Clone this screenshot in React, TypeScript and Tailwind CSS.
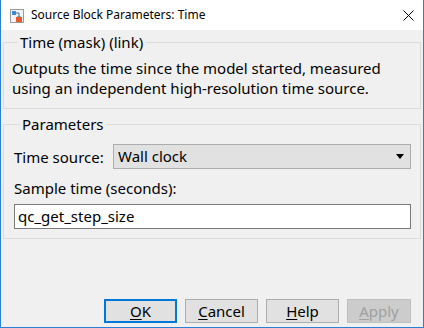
const font = { fontFamily: '"Segoe UI", "Noto Sans", "Liberation Sans", sans-serif' };

function BlockIcon() {
  return (
    <svg width="14" height="14" viewBox="0 0 14 14" aria-hidden="true">
      <rect x="0.5" y="0.5" width="13" height="13" fill="#f4f4f4" stroke="#9a9a9a" />
      <rect x="2" y="2" width="4" height="4" fill="#3a8ad8" />
      <path d="M6 4 H9 V8" fill="none" stroke="#3a6fb0" strokeWidth="1" />
      <path d="M7.5 7 L9 8.5 L10.5 7" fill="none" stroke="#3a6fb0" strokeWidth="1" />
      <rect x="6" y="8" width="6" height="5" fill="#e8582a" />
    </svg>
  );
}

function CloseGlyph() {
  return (
    <svg width="11" height="11" viewBox="0 0 11 11" aria-hidden="true">
      <path d="M0.5 0.5 L10.5 10.5 M10.5 0.5 L0.5 10.5" stroke="#000" strokeWidth="1" />
    </svg>
  );
}

function DialogButton({
  mnemonic,
  rest,
  primary,
  disabled,
  width,
}: {
  mnemonic: string;
  rest: string;
  primary?: boolean;
  disabled?: boolean;
  width: string;
}) {
  const look = primary
    ? 'border-2 border-[#0078d7] bg-[#e1e1e1] text-black'
    : disabled
      ? 'border border-[#bfbfbf] bg-[#cccccc] text-[#a0a0a0]'
      : 'border border-[#adadad] bg-[#e1e1e1] text-black';
  return (
    <button
      type="button"
      disabled={disabled}
      className={`h-[24px] flex items-center justify-center text-[15px] leading-none ${look} ${width}`}
    >
      <span>
        <span className="underline underline-offset-[2px]">{mnemonic}</span>
        {rest}
      </span>
    </button>
  );
}

export default function App() {
  return (
    <div
      className="w-[424px] h-[328px] flex flex-col bg-[#f0f0f0] border-x border-b border-[#2b7fd4] text-black"
      style={font}
    >
      {/* title bar */}
      <div className="h-[30px] shrink-0 bg-white flex items-center">
        <div className="ml-[9px] mt-[1px]">
          <BlockIcon />
        </div>
        <span className="ml-[7px] text-[12px] leading-none">Source Block Parameters: Time</span>
        <div className="ml-auto mr-[9px] mt-[1px]">
          <CloseGlyph />
        </div>
      </div>

      <div className="px-[2px] flex flex-col">
        <fieldset className="mt-[2px] h-[77px] border border-[#dcdcdc] pl-[8px] pr-[8px]">
          <legend className="ml-[6px] px-[2px] text-[15px] leading-[20px]">Time (mask) (link)</legend>
          <p className="mt-[6px] text-[15px] leading-[20px] whitespace-nowrap">
            Outputs the time since the model started, measured
            <br />
            using an independent high-resolution time source.
          </p>
        </fieldset>

        <fieldset className="mt-[5px] h-[125px] border border-[#dcdcdc] pl-[10px] pr-[9px]">
          <legend className="ml-[6px] px-[2px] text-[15px] leading-[20px]">Parameters</legend>
          <div className="mt-[10px] flex items-center">
            <span className="w-[99px] text-[15px] leading-[20px]">Time source:</span>
            <div className="flex-1 h-[25px] flex items-center border border-[#adadad] bg-[#e1e1e1] pl-[4px] pr-[6px]">
              <span className="text-[15px] leading-none">Wall clock</span>
              <svg className="ml-auto" width="8" height="5" viewBox="0 0 8 5" aria-hidden="true">
                <path d="M0 0 H8 L4 5 Z" fill="#000" />
              </svg>
            </div>
          </div>
          <div className="mt-[9px] text-[15px] leading-[20px]">Sample time (seconds):</div>
          <div className="mt-[6px] h-[25px] flex items-center border border-[#7a7a7a] bg-white pl-[3px]">
            <span className="text-[15px] leading-none">qc_get_step_size</span>
          </div>
        </fieldset>
      </div>

      <div className="mt-auto mb-[4px] mr-[12px] flex justify-end gap-[8px]">
        <DialogButton primary mnemonic="O" rest="K" width="w-[73px]" />
        <DialogButton mnemonic="C" rest="ancel" width="w-[73px]" />
        <DialogButton mnemonic="H" rest="elp" width="w-[73px]" />
        <DialogButton disabled mnemonic="A" rest="pply" width="w-[64px]" />
      </div>
    </div>
  );
}
